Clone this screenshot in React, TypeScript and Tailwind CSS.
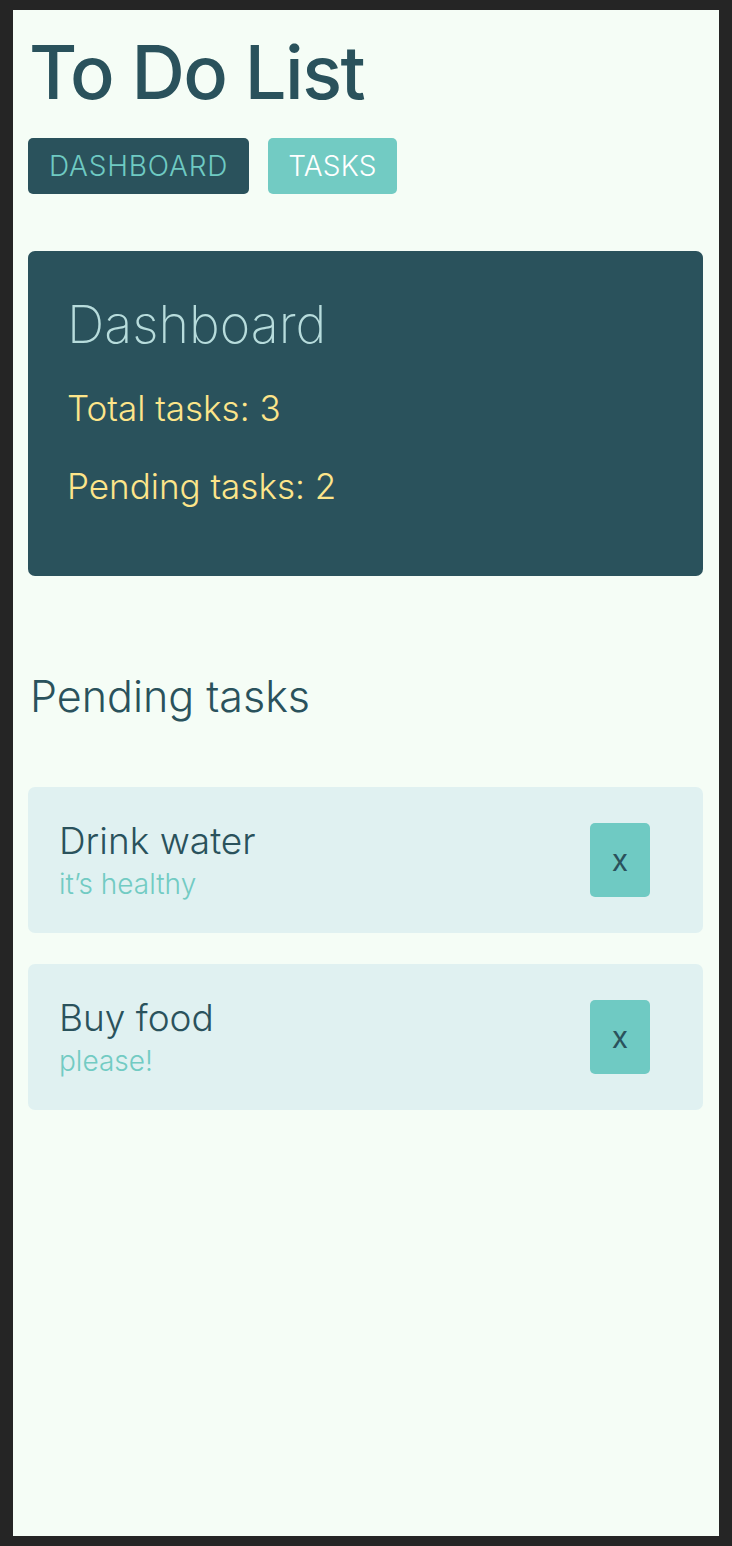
import React, { useState } from 'react';

interface Task {
  id: number;
  title: string;
  note: string;
  done: boolean;
}

const initialTasks: Task[] = [
  { id: 1, title: 'Drink water', note: 'it’s healthy', done: false },
  { id: 2, title: 'Buy food', note: 'please!', done: false },
  { id: 3, title: 'Walk the dog', note: 'twice', done: true },
];

export default function App() {
  const [tasks, setTasks] = useState<Task[]>(initialTasks);
  const [tab, setTab] = useState<'dashboard' | 'tasks'>('dashboard');

  const pending = tasks.filter(t => !t.done);

  const removeTask = (id: number) => setTasks(prev => prev.filter(t => t.id !== id));

  return (
    <div className="min-h-[1546px] bg-[#252525] px-[13px] pt-[10px] pb-[10px] flex">
      <div
        className="flex-1 bg-[#f5fdf6] pl-[15px] pr-[16px] pt-[22px] text-[#2a525c]"
        style={{ fontFamily: 'Inter, "Noto Sans", sans-serif' }}
      >
        <h1 className="text-[74px] leading-[80px] font-medium tracking-[-1.5px] pl-[1px]">To Do List</h1>

        <nav className="mt-[26px] flex gap-[19px]">
          <button
            onClick={() => setTab('dashboard')}
            className="h-[56px] px-[21px] rounded-[5px] bg-[#2a525c] text-[#6fcac3] text-[28px] tracking-[0.8px] font-light flex items-center"
          >
            DASHBOARD
          </button>
          <button
            onClick={() => setTab('tasks')}
            className="h-[56px] px-[20px] rounded-[5px] bg-[#72cbc3] text-white text-[28px] tracking-[0.2px] font-light flex items-center"
          >
            TASKS
          </button>
        </nav>

        {tab === 'dashboard' && (
          <section className="mt-[57px] h-[325px] rounded-[7px] bg-[#2a525c] pl-[39px] pt-[42px]">
            <h2 className="text-[52px] leading-[64px] font-extralight text-[#b7dcdc]">Dashboard</h2>
            <p className="mt-[29px] text-[35px] leading-[44px] font-light text-[#fde58a]">
              Total tasks: {tasks.length}
            </p>
            <p className="mt-[34px] text-[35px] leading-[44px] font-light text-[#fde58a]">
              Pending tasks: {pending.length}
            </p>
          </section>
        )}

        <h2 className="mt-[92px] text-[43px] leading-[56px] font-light pl-[2px]">Pending tasks</h2>

        <ul className="mt-[63px] flex flex-col gap-[31px]">
          {pending.map(task => (
            <li
              key={task.id}
              className="h-[146px] rounded-[7px] bg-[#e0f1f1] pl-[31px] pr-[53px] flex items-center justify-between"
            >
              <div className="flex flex-col">
                <span className="text-[37px] leading-[44px] font-light">{task.title}</span>
                <span className="mt-[4px] text-[28px] leading-[34px] font-light text-[#72cbc3]">{task.note}</span>
              </div>
              <button
                onClick={() => removeTask(task.id)}
                className="w-[60px] h-[74px] rounded-[5px] bg-[#6fcac3] text-[#2a525c] text-[30px] flex items-center justify-center"
              >
                x
              </button>
            </li>
          ))}
        </ul>
      </div>
    </div>
  );
}
